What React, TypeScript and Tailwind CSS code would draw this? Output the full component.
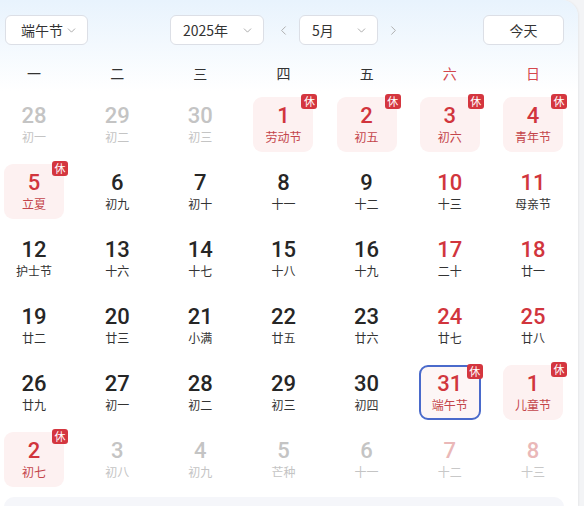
import React from "react";
import { ChevronDown, ChevronLeft, ChevronRight } from "lucide-react";

type Day = {
  n: number;
  l: string;
  kind: "out" | "norm" | "wkend" | "hol" | "outwk";
  sel?: boolean;
};

const rows: Day[][] = [
  [
    { n: 28, l: "初一", kind: "out" },
    { n: 29, l: "初二", kind: "out" },
    { n: 30, l: "初三", kind: "out" },
    { n: 1, l: "劳动节", kind: "hol" },
    { n: 2, l: "初五", kind: "hol" },
    { n: 3, l: "初六", kind: "hol" },
    { n: 4, l: "青年节", kind: "hol" },
  ],
  [
    { n: 5, l: "立夏", kind: "hol" },
    { n: 6, l: "初九", kind: "norm" },
    { n: 7, l: "初十", kind: "norm" },
    { n: 8, l: "十一", kind: "norm" },
    { n: 9, l: "十二", kind: "norm" },
    { n: 10, l: "十三", kind: "wkend" },
    { n: 11, l: "母亲节", kind: "wkend" },
  ],
  [
    { n: 12, l: "护士节", kind: "norm" },
    { n: 13, l: "十六", kind: "norm" },
    { n: 14, l: "十七", kind: "norm" },
    { n: 15, l: "十八", kind: "norm" },
    { n: 16, l: "十九", kind: "norm" },
    { n: 17, l: "二十", kind: "wkend" },
    { n: 18, l: "廿一", kind: "wkend" },
  ],
  [
    { n: 19, l: "廿二", kind: "norm" },
    { n: 20, l: "廿三", kind: "norm" },
    { n: 21, l: "小满", kind: "norm" },
    { n: 22, l: "廿五", kind: "norm" },
    { n: 23, l: "廿六", kind: "norm" },
    { n: 24, l: "廿七", kind: "wkend" },
    { n: 25, l: "廿八", kind: "wkend" },
  ],
  [
    { n: 26, l: "廿九", kind: "norm" },
    { n: 27, l: "初一", kind: "norm" },
    { n: 28, l: "初二", kind: "norm" },
    { n: 29, l: "初三", kind: "norm" },
    { n: 30, l: "初四", kind: "norm" },
    { n: 31, l: "端午节", kind: "hol", sel: true },
    { n: 1, l: "儿童节", kind: "hol" },
  ],
  [
    { n: 2, l: "初七", kind: "hol" },
    { n: 3, l: "初八", kind: "out" },
    { n: 4, l: "初九", kind: "out" },
    { n: 5, l: "芒种", kind: "out" },
    { n: 6, l: "十一", kind: "out" },
    { n: 7, l: "十二", kind: "outwk" },
    { n: 8, l: "十三", kind: "outwk" },
  ],
];

const weekdays = ["一", "二", "三", "四", "五", "六", "日"];

function Cell({ d }: { d: Day }) {
  let box = "";
  let num = "text-[#262626]";
  let lun = "text-[#333333]";
  if (d.kind === "out") {
    num = "text-[#c4c4c4]";
    lun = "text-[#c4c4c4]";
  } else if (d.kind === "outwk") {
    num = "text-[#eab8b8]";
    lun = "text-[#c8c8c8]";
  } else if (d.kind === "wkend") {
    num = "text-[#d1353d]";
  } else if (d.kind === "hol") {
    num = "text-[#d1353d]";
    lun = "text-[#c4454b]";
    box = "bg-[#fdf1f1]";
  }
  if (d.sel) {
    box = "bg-[#fdf6f6] border-2 border-[#4a6acb] -mx-[1px]";
  }
  return (
    <div className={`relative flex h-[55px] flex-col items-center justify-center rounded-[9px] ${box}`}>
      <div
        className={`text-[22px] font-medium leading-[25px] ${num}`}
        style={{ fontFamily: "Roboto, sans-serif" }}
      >
        {d.n}
      </div>
      <div className={`text-[12px] leading-[17.5px] ${lun}`}>{d.l}</div>
      {d.kind === "hol" && (
        <div className="absolute -right-[4px] -top-[3px] flex h-[15px] w-[16px] items-center justify-center overflow-hidden rounded-[3px] bg-[#d4363f] text-[11px] leading-[15px] text-white">
          休
        </div>
      )}
    </div>
  );
}

export default function App() {
  return (
    <div
      className="h-[506px] w-[584px] overflow-hidden bg-[#f3f4f6]"
      style={{ fontFamily: '"Noto Sans CJK SC", "Noto Sans", sans-serif' }}
    >
      <div className="h-[506px] w-[578px] rounded-tr-[16px] bg-gradient-to-b from-[#e8f3fd] via-white via-[18%] to-white pl-[4px] pt-[15px] shadow-[1px_0_2px_rgba(0,0,0,0.05)]">
        {/* header */}
        <div className="flex h-[30px] w-[560px] items-center">
          <div className="ml-[1px] flex h-[30px] w-[83px] items-center justify-between rounded-[6px] border border-[#dcdfe6] bg-white pl-[15px] pr-[9px] text-[14px] text-[#333]">
            <span>端午节</span>
            <ChevronDown size={13} strokeWidth={1.5} className="text-[#999]" />
          </div>
          <div className="ml-[82px] flex h-[30px] w-[94px] items-center justify-between rounded-[6px] border border-[#dcdfe6] bg-white pl-[12px] pr-[9px] text-[14px] text-[#333]">
            <span>2025年</span>
            <ChevronDown size={13} strokeWidth={1.5} className="text-[#999]" />
          </div>
          <ChevronLeft size={15} strokeWidth={1.5} className="ml-[12px] text-[#aaa]" />
          <div className="ml-[8px] flex h-[30px] w-[79px] items-center justify-between rounded-[6px] border border-[#dcdfe6] bg-white pl-[12px] pr-[9px] text-[14px] text-[#333]">
            <span>5月</span>
            <ChevronDown size={13} strokeWidth={1.5} className="text-[#999]" />
          </div>
          <ChevronRight size={15} strokeWidth={1.5} className="ml-[8px] text-[#aaa]" />
          <div className="ml-auto flex h-[30px] w-[81px] items-center justify-center rounded-[6px] border border-[#dcdfe6] bg-white text-[14px] text-[#333]">
            今天
          </div>
        </div>

        {/* weekdays */}
        <div className="mt-[14px] grid h-[28px] grid-cols-[repeat(7,60px)] gap-x-[23.17px]">
          {weekdays.map((w, i) => (
            <div
              key={w}
              className={`flex items-center justify-center text-[14px] ${i >= 5 ? "text-[#d4474d]" : "text-[#333]"}`}
            >
              {w}
            </div>
          ))}
        </div>

        {/* days */}
        <div className="mt-[10px] grid grid-cols-[repeat(7,60px)] gap-x-[23.17px] gap-y-[12px]">
          {rows.flat().map((d, i) => (
            <Cell key={i} d={d} />
          ))}
        </div>

        <div className="mt-[10px] h-[20px] w-[560px] rounded-t-[10px] bg-[#f5f6fa]" />
      </div>
    </div>
  );
}
